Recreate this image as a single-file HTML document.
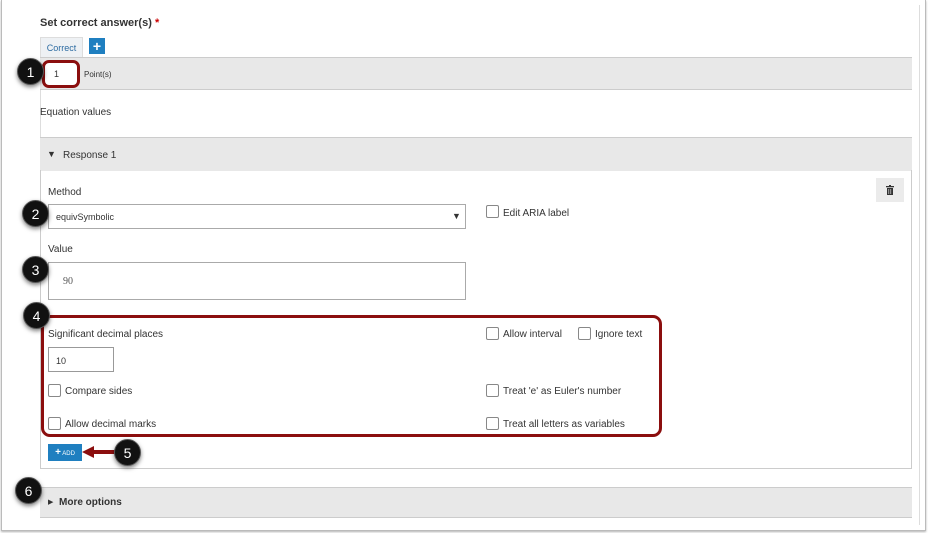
<!DOCTYPE html>
<html><head><style>
*{box-sizing:border-box;margin:0;padding:0}
body{width:928px;height:533px;background:#fff;font-family:"Liberation Sans",sans-serif;color:#333;position:relative;overflow:hidden}
.a{position:absolute}
.frame{left:1px;top:0;width:925px;height:531px;border:1px solid #bbb;border-top:none;box-shadow:0 1px 2px rgba(0,0,0,.3)}
.cb{position:absolute;width:13px;height:13px;border:1px solid #888;border-radius:2px;background:#fff}
.t{position:absolute;font-size:10px;color:#333;white-space:nowrap}
.c{position:absolute;width:27px;height:27px;border-radius:50%;background:#111;color:#fff;font-size:14px;text-align:center;line-height:27px;box-shadow:0 2px 4px rgba(0,0,0,.5);border:1px solid #555}
.red{position:absolute;border:3px solid #8b0e0e;border-radius:7px}
</style></head><body>
<div class="a frame"></div>
<div class="a" style="left:919px;top:5px;width:1px;height:520px;background:#ddd"></div>
<div class="t" style="left:40px;top:17px;font-weight:bold;font-size:11px">Set correct answer(s) <span style="color:#c00">*</span></div>
<div class="a" style="left:40px;top:37px;width:43px;height:20px;background:#eef1f4;border:1px solid #ddd;border-bottom:none;font-size:9px;color:#2d6ca2;text-align:center;line-height:21px">Correct</div>
<div class="a" style="left:89px;top:38px;width:16px;height:16px;background:#1f7fc0;color:#fff;font-weight:bold;text-align:center;line-height:16px;font-size:14px">+</div>
<div class="a" style="left:40px;top:57px;width:872px;height:33px;background:#e8e8e8;border-top:1px solid #ccc;border-bottom:1px solid #ccc"></div>
<div class="a" style="left:44px;top:62px;width:33px;height:23px;background:#fff"></div>
<div class="t" style="left:54px;top:69px;font-size:9px">1</div>
<div class="t" style="left:84px;top:70px;font-size:8px">Point(s)</div>
<div class="red" style="left:42px;top:60px;width:38px;height:28px"></div>
<div class="a" style="left:40px;top:90px;width:1px;height:48px;background:#ddd"></div>
<div class="t" style="left:40px;top:107px">Equation values</div>
<div class="a" style="left:40px;top:137px;width:872px;height:34px;background:#e8e8e8;border-top:1px solid #ccc"></div>
<div class="t" style="left:47px;top:149px;font-size:9px">▼</div>
<div class="t" style="left:63px;top:150px">Response 1</div>
<div class="a" style="left:40px;top:170px;width:872px;height:299px;border:1px solid #ccc;border-top:none"></div>
<div class="t" style="left:48px;top:187px">Method</div>
<div class="a" style="left:48px;top:204px;width:418px;height:25px;border:1px solid #aaa"></div>
<div class="t" style="left:56px;top:212px;font-size:9px">equivSymbolic</div>
<div class="t" style="left:452px;top:211px;font-size:9px">▼</div>
<div class="cb" style="left:486px;top:205px"></div><div class="t" style="left:503px;top:208px">Edit ARIA label</div>
<div class="a" style="left:876px;top:178px;width:28px;height:24px;background:#ebebeb"></div>
<svg class="a" style="left:886px;top:185px" width="8" height="10" viewBox="0 0 8 10"><rect x="0" y="1" width="8" height="1.3" fill="#333"/><rect x="3" y="0" width="2" height="1" fill="#333"/><rect x="1" y="3" width="6" height="7" fill="#333"/><rect x="2.5" y="4" width=".6" height="5" fill="#ebebeb"/><rect x="4.5" y="4" width=".6" height="5" fill="#ebebeb"/></svg>
<div class="t" style="left:48px;top:244px">Value</div>
<div class="a" style="left:48px;top:262px;width:418px;height:38px;border:1px solid #aaa"></div>
<div class="t" style="left:63px;top:276px;font-family:'Liberation Serif',serif;color:#555">90</div>
<div class="t" style="left:48px;top:329px">Significant decimal places</div>
<div class="a" style="left:48px;top:347px;width:66px;height:25px;border:1px solid #999"></div>
<div class="t" style="left:56px;top:356px;font-size:9px">10</div>
<div class="cb" style="left:48px;top:384px"></div><div class="t" style="left:65px;top:386px">Compare sides</div>
<div class="cb" style="left:48px;top:417px"></div><div class="t" style="left:65px;top:419px">Allow decimal marks</div>
<div class="cb" style="left:486px;top:327px"></div><div class="t" style="left:503px;top:329px">Allow interval</div>
<div class="cb" style="left:578px;top:327px"></div><div class="t" style="left:595px;top:329px">Ignore text</div>
<div class="cb" style="left:486px;top:384px"></div><div class="t" style="left:503px;top:386px">Treat 'e' as Euler's number</div>
<div class="cb" style="left:486px;top:417px"></div><div class="t" style="left:503px;top:419px">Treat all letters as variables</div>
<div class="red" style="left:41px;top:315px;width:621px;height:122px;border-radius:9px"></div>
<div class="a" style="left:48px;top:444px;width:34px;height:17px;background:#1f7fc0;color:#fff;font-size:6px;line-height:17px;text-align:center"><b style="font-size:10px">+</b> ADD</div>
<div class="a" style="left:92px;top:450px;width:25px;height:4px;background:#8b0e0e"></div>
<div class="a" style="left:82px;top:446px;width:0;height:0;border-top:6px solid transparent;border-bottom:6px solid transparent;border-right:12px solid #8b0e0e"></div>
<div class="a" style="left:40px;top:487px;width:872px;height:31px;background:#e8e8e8;border-top:1px solid #ccc;border-bottom:1px solid #ccc"></div>
<div class="t" style="left:48px;top:498px;font-size:7px">▶</div>
<div class="t" style="left:59px;top:497px;font-weight:bold">More options</div>
<div class="c" style="left:17px;top:58px">1</div>
<div class="c" style="left:22px;top:200px">2</div>
<div class="c" style="left:22px;top:256px">3</div>
<div class="c" style="left:23px;top:302px">4</div>
<div class="c" style="left:114px;top:439px">5</div>
<div class="c" style="left:15px;top:477px">6</div>
</body></html>
